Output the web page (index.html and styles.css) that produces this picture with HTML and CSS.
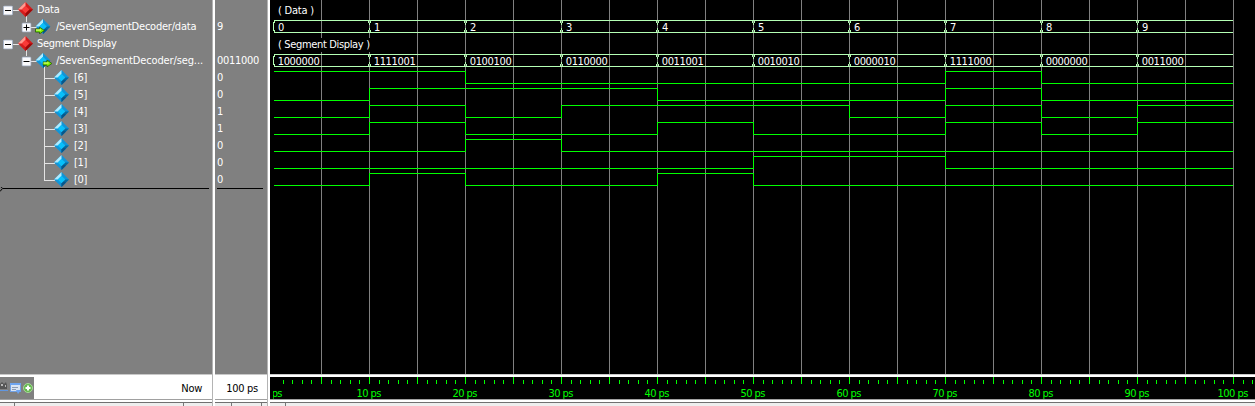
FILE: index.html
```html
<!DOCTYPE html>
<html lang="en">
<head>
<meta charset="utf-8">
<title>Wave</title>
<link rel="stylesheet" href="styles.css">
</head>
<body>
<svg class="defs" width="0" height="0">
  <defs>
    <symbol id="blue" viewBox="0 0 15 15"><path fill="#1095d8" d="M7.5 0 15 7.5 7.5 15 0 7.5z"/><path fill="#b0ebff" d="M7.5 0v4L4 7.5H0z"/><path fill="#08699c" d="M15 7.5 7.5 15v-4L11 7.5z"/><path fill="#07578b" d="M7.5 15v-4L9 9.5l3 1z"/><path fill="#08c0fa" d="M7.5 3.7 11.3 7.5 7.5 11.3 3.7 7.5z"/></symbol>
    <symbol id="red" viewBox="0 0 15 15"><path fill="#d41c1c" d="M7.5 0 15 7.5 7.5 15 0 7.5z"/><path fill="#ff9b92" d="M7.5 0v4L4 7.5H0z"/><path fill="#9c0808" d="M15 7.5 7.5 15v-4L11 7.5z"/><path fill="#f83a38" d="M7.5 3.7 11.3 7.5 7.5 11.3 3.7 7.5z"/></symbol>
    <symbol id="box" viewBox="0 0 10 10"><rect x=".5" y=".5" width="9" height="9" rx="1" fill="#fafafc" stroke="#a9b5c9"/><path fill="#000" d="M2 4.5h6v1H2z"/></symbol>
    <symbol id="arrow" viewBox="0 0 10 8"><path fill="#7ff000" stroke="#245f08" stroke-width=".8" d="M.5 2.4h4V.6L9.4 4 4.5 7.4V5.6h-4z"/><path fill="#e4ff90" d="M1 3h5v1H1z"/></symbol>
  </defs>
</svg>
<main class="wave-window">
  <section class="names pane">
    <div class="row"><svg width="37" height="17"><path class="tree" d="M13 10.5h7M26.5 14v3"/><use href="#box" x="3" y="5.5" width="10" height="10"/><use href="#red" x="18" y="2" width="15" height="15"/></svg><span>Data</span></div>
    <div class="row"><svg width="56" height="17"><path class="tree" d="M26.5 0v5M31 10.5h6"/><use href="#box" x="21.5" y="5.5" width="10" height="10"/><path fill="#000" d="M26 7.5h1v6h-1z"/><use href="#blue" x="35.5" y="2" width="15" height="15"/><use href="#arrow" x="35" y="9.5" width="10" height="8"/></svg><span class="path-a">/SevenSegmentDecoder/data</span></div>
    <div class="row"><svg width="37" height="17"><path class="tree" d="M13 10.5h7M26.5 14v3"/><use href="#box" x="3" y="5.5" width="10" height="10"/><use href="#red" x="18" y="2" width="15" height="15"/></svg><span>Segment Display</span></div>
    <div class="row"><svg width="56" height="17"><path class="tree" d="M26.5 0v5M31 10.5h6M44.5 15v2"/><use href="#box" x="21.5" y="5.5" width="10" height="10"/><use href="#blue" x="35.5" y="2" width="15" height="15"/><use href="#arrow" x="42.5" y="8.5" width="10" height="8"/></svg><span class="path-b">/SevenSegmentDecoder/seg...</span></div>
    <div id="bits"></div>
    <svg class="insert" width="209" height="7"><path stroke="#000" fill="#777" d="M0-1.5 2.5 1.5 0 4.5"/><path fill="#000" d="M3 1h206v1H3z"/></svg>
  </section>
  <div class="splitter"></div>
  <section class="values pane" id="values"></section>
  <div class="splitter"></div>
  <section class="waves"><svg id="wave" width="985" height="374" shape-rendering="crispEdges"></svg></section>

  <footer class="now">
    <div class="tools"><svg width="34" height="22">
      <path fill="#555" d="M0 7l2-2 2 2 2-2 1 3v4H0z"/><path fill="#b8b8b8" d="M1 7h2v2H1zM5 8h1v2H5z"/><path stroke="#6096e0" fill="none" d="M0 13.5h8"/>
      <rect x="10.5" y="6.5" width="10" height="8" fill="#d9e4f4" stroke="#72a2e4"/><path fill="#6da4f0" d="M10 6h11v2H10zM16 13h5l-3 4z"/><path stroke="#8d9cb3" d="M12 10.5h6M12 12.5h4"/>
      <circle cx="28" cy="11" r="4.5" fill="#65b84f" stroke="#a8d899"/><path stroke="#fff" stroke-width="2" d="M25.5 11h5M28 8.5v5"/>
    </svg></div>
    <span>Now</span>
  </footer>
  <div class="splitter low"></div>
  <footer class="time"><span>100 ps</span></footer>
  <div class="splitter low"></div>
  <footer class="ruler"><svg id="ruler" width="985" height="22"></svg></footer>

  <div class="scroll s1"><i></i><i></i></div>
  <div class="splitter low"></div>
  <div class="scroll s2"><i></i><i></i></div>
  <div class="splitter low"></div>
  <div class="scroll s3"><i></i></div>
</main>
<script src="wave.js"></script>
</body>
</html>
```
FILE: styles.css
```css
body {
  margin: 0;
  overflow: hidden;
  background: #fff;
  font: 11px/17px "DejaVu Sans Condensed", "DejaVu Sans", sans-serif;
  font-stretch: condensed;
  letter-spacing: -0.3px;
}
.defs { position: absolute; }
svg { display: block; flex: none; }
.wave-window {
  display: grid;
  width: 1255px;
  height: 406px;
  grid-template-columns: 212px 3px 52px 3px 985px;
  grid-template-rows: 374px 29px 3px;
}
.pane {
  background: #808080;
  color: #fff;
  overflow: hidden;
  border-bottom: 1px solid #c8c8c8;
  height: 374px;
}
.splitter {
  box-sizing: border-box;
  background: #fff;
  border-left: 1px solid #b4b4b4;
}
.row { display: flex; height: 17px; white-space: nowrap; }
.row span { padding-top: 1px; }
.path-a { letter-spacing: -0.22px; }
.path-b { letter-spacing: -0.13px; }
.tree { fill: none; stroke: #e4e4e4; }
.insert { width: 209px; }
.values { display: flex; flex-direction: column; padding-left: 2px; }
.values .row { padding-top: 1px; height: 16px; }
.values .line { width: 46px; height: 1px; margin-top: 1px; background: #000; }
.waves { background: #000; border-bottom: 1px solid #c8c8c8; height: 374px; }
.wave-text { fill: #fff; }
.grid { fill: #808080; }
.trace { fill: none; stroke: #00ff00; }
.bus { fill: #b4ffb4; }
.now, .time, .ruler {
  box-sizing: border-box;
  height: 29px;
  border-top: 1px solid #c8c8c8;
  padding-top: 2px;
  background: linear-gradient(#a0a0a0, #a0a0a0) 0 24px / 100% 1px no-repeat, linear-gradient(#707070, #707070) 0 27px / 100% 1px no-repeat, #fff;
}
.now { display: flex; justify-content: space-between; padding-right: 10px; }
.tools { width: 34px; height: 22px; background: #808080; }
.now span, .time span { padding-top: 3px; }
.time { display: flex; justify-content: center; padding-left: 2px; }
.ruler svg { background: #000; }
.ruler text { fill: #00ff00; }
.scroll { display: flex; justify-content: space-between; background: #eee; }
.scroll i { width: 1px; height: 3px; background: #777; }
.s1 { padding: 0 28px 0 14px; }
.s2 { padding: 0 5px 0 16px; }
.s3 { padding-left: 15px; }
```
FILE: wave.js
```js
const codes = ["1000000", "1111001", "0100100", "0110000", "0011001",
  "0010010", "0000010", "1111000", "0000000", "0011000"];
const PANE = 270, START = 274 - PANE, FIRST = 273 - PANE, STEP = 96;

document.getElementById("bits").innerHTML = [6, 5, 4, 3, 2, 1, 0].map(bit =>
  `<div class="row"><svg width="74" height="17"><path class="tree" d="M44.5 0v${bit ? 17 : 11}M44 10.5h11"/><use href="#blue" x="54" y="2" width="15" height="15"/></svg><span>[${bit}]</span></div>`).join("");

document.getElementById("values").innerHTML =
  ["", "9", "", "0011000", 0, 0, 1, 1, 0, 0, 0].map(v => `<div class="row">${v}</div>`).join("") +
  '<div class="line"></div>';

let out = "";
for (let x = 321 - PANE; x <= 1233 - PANE; x += 48) out += `<rect class="grid" x="${x}" y="0" width="1" height="374"/>`;

const rect = (x, y, w, h) => `<rect class="bus" x="${x}" y="${y}" width="${w}" height="${h}"/>`;
const label = (x, y, s, w) => `<text class="wave-text" x="${x}" y="${y}" textLength="${w}" letter-spacing="0">${s}</text>`;

[[20, codes.map((_, i) => String(i))], [54, codes]].forEach(([y, names]) => {
  out += rect(START, y, 959, 1) + rect(START, y + 12, 959, 1);
  names.forEach((name, i) => {
    const x = FIRST + i * STEP;
    if (i) out += rect(x - 1, y, 1, 3) + rect(x - 1, y + 10, 1, 3);
    out += rect(x + 1, y, 1, 3) + rect(x + 1, y + 10, 1, 3) + rect(x, y + 3, 1, 2) + rect(x, y + 8, 1, 2);
    if (!i) out += rect(x, y + 2, 1, 9);
    out += label(x + (name.length === 1 ? 5 : 4.7), y + 11, name, name.length * 6);
  });
});
out += '<rect x="8" y="38" width="92" height="14"/>';
out += label(8, 14, "( Data )", 36) + label(8, 48, "( Segment Display )", 92);

for (let b = 0; b < 7; b++) {
  let d = "";
  codes.forEach((code, i) => {
    const y = 71.5 + b * 17 + (code[b] === "1" ? 0 : 12);
    const x = FIRST + 0.5 + i * STEP;
    d += i ? `H${x}V${y}` : `M${START} ${y}`;
  });
  out += `<path class="trace" d="${d}H963"/>`;
}
document.getElementById("wave").innerHTML = out;

let marks = '<svg x="3" width="982" height="22">';
for (let i = 1; i <= 102; i++) {
  const major = i % 5 === 0;
  marks += `<rect x="${Math.round(i * 9.6)}" y="${major ? 0 : 3}" width="1" height="${major ? 7 : 4}" fill="#00ff00"/>`;
}
for (let i = 0; i <= 10; i++) {
  const w = i === 0 ? 19 : i === 10 ? 31 : 25;
  marks += `<text x="${i * 96 - w / 2}" y="20" textLength="${w}" letter-spacing="0">${i * 10} ps</text>`;
}
document.getElementById("ruler").innerHTML = marks + "</svg>";
```
